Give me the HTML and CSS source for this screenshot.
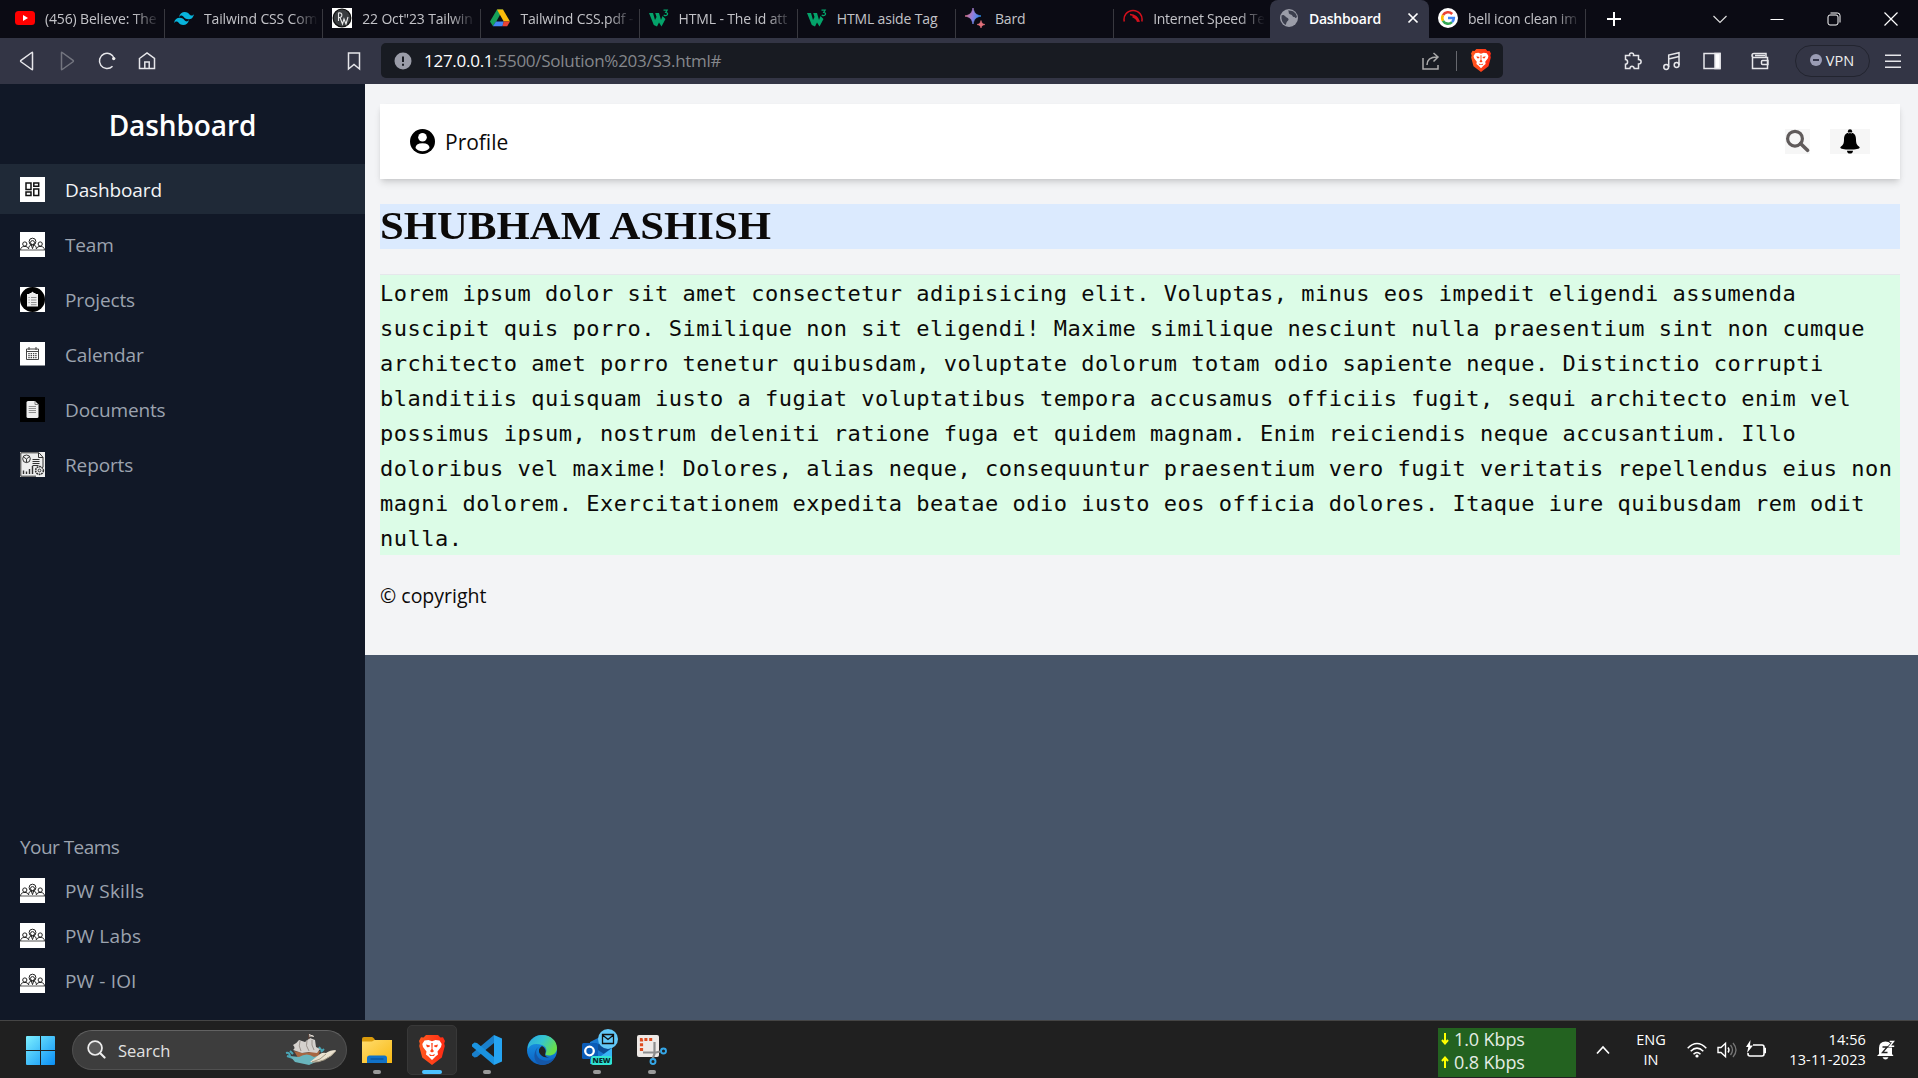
FILE: index.html
```html
<!DOCTYPE html>
<html lang="en">
<head>
<meta charset="utf-8">
<title>Dashboard</title>
<link rel="stylesheet" href="styles.css">
</head>
<body>
<svg class="defs" width="0" height="0" aria-hidden="true">
  <defs>
    <linearGradient id="g-win" x1="0" y1="0" x2="1" y2="1"><stop offset="0" stop-color="#7df0ff"/><stop offset="1" stop-color="#0a8ff5"/></linearGradient>
    <linearGradient id="g-brave" x1="0" y1="0" x2="1" y2="0"><stop offset="0" stop-color="#ff5a1f"/><stop offset="1" stop-color="#ff2a14"/></linearGradient>
    <linearGradient id="g-folder" x1="0" y1="0" x2="1" y2="1"><stop offset="0" stop-color="#ffdc6e"/><stop offset="1" stop-color="#f9b912"/></linearGradient>
    <linearGradient id="g-bard" x1="0" y1="0.3" x2="1" y2="0.6"><stop offset="0" stop-color="#e2707a"/><stop offset=".5" stop-color="#8f7fe0"/><stop offset="1" stop-color="#1b8ff0"/></linearGradient>
    <linearGradient id="g-edge" x1="0" y1="0" x2="1" y2=".5"><stop offset="0" stop-color="#2aa8e0"/><stop offset=".5" stop-color="#35c5d0"/><stop offset="1" stop-color="#68e04a"/></linearGradient>
    <linearGradient id="g-edge2" x1="0" y1="0" x2="0" y2="1"><stop offset="0" stop-color="#1a9be8"/><stop offset="1" stop-color="#0b62c4"/></linearGradient>
    <symbol id="team" viewBox="0 0 25 25">
      <rect width="25" height="25" fill="#fff"/>
      <g fill="none" stroke="#222" stroke-width="1"><circle cx="12.500" cy="9.600" r="3.400"/><circle cx="12.500" cy="10.600" r="2"/><path d="M8.600 17c0-2.600 1-3.600 2.700-4l1.200 3.600 1.200-3.600c1.700.400 2.700 1.400 2.700 4"/><circle cx="4.800" cy="12" r="2.100"/><circle cx="20.200" cy="12" r="2.100"/><path d="M.6 18c0-2.600 1.600-3.300 3.200-3.500h2.200c1.200.300 2 .900 2.300 2M24.400 18c0-2.600-1.600-3.300-3.200-3.500H19c-1.200.300-2 .900-2.300 2"/></g>
      <path d="M0 18h25" stroke="#555" stroke-width="1"/>
    </symbol>
    <symbol id="brave" viewBox="0 0 26 30">
      <path d="M7 0h12l2.500 2.500L24 2.200 26 6l-.8 2.500.6 2.500-3 11.500L13 30 3.200 22.500.2 11l.6-2.500L0 6l2-3.800 2.500.3z" fill="url(#g-brave)"/>
      <path d="M5.500 5.500 9.500 5l3.500 1.200L16.500 5l4 .5 2.200 3.500-.7 3-3.500 4.500.5 3-2.500 2L13 25l-3.500-3.500-2.500-2 .5-3L4 12 3.300 9z" fill="#fff"/>
      <path d="M7 9.500l4 1-.6 1.500-2.400.2zM19 9.500l-4 1 .6 1.500 2.400.2zM12.300 8h1.400l-.2 6 1.500 2.300L13 17.600l-2-1.300 1.500-2.300zM10 19l3 1.300 3-1.300-1 1.900H11z" fill="#ff4018"/>
    </symbol>
    <symbol id="w3" viewBox="0 0 20 20"><path d="M0 5h4l2 7 1.500-3L6.200 5H10l2 7 1.500-4 3 3-4 7.500L10 14.500 8 18.500 4.800 17z" fill="#04a36a"/><path d="M14.500 2.200h3.700L16.700 4.500c3.300.2 2 4.200-2 2.600" fill="none" stroke="#04a36a" stroke-width="1.200"/></symbol>
  </defs>
</svg>

<header class="tabs">
  <div class="tab"><svg class="fav" viewBox="0 0 20 20"><rect y="3" width="20" height="14" rx="3.500" fill="#f00"/><path d="M8 7l5 3-5 3z" fill="#fff"/></svg><span class="label">(456) Believe: The</span></div>
  <div class="tab"><svg class="fav" viewBox="0 0 20 20"><path d="M5 9.200C5.800 5.600 8 4 10.800 4c4 0 4.300 3 6.300 3.500 1.200.3 2-.2 2.900-1.300-.9 3.700-2.700 5-5.700 5-4 0-4.300-3-6.300-3.500C6.800 7.400 5.900 8 5 9.200zM0 15c.8-3.600 2.900-5.200 5.800-5.200 4 0 4.300 3 6.300 3.500 1.200.3 2.100-.3 2.900-1.400-.9 3.600-2.800 5-5.800 5-4 0-4.300-2.900-6.300-3.400C1.800 13.200.900 13.800 0 15z" fill="#08b4dc"/></svg><span class="label">Tailwind CSS Com</span></div>
  <div class="tab"><svg class="fav" viewBox="0 0 20 20"><rect width="20" height="20" fill="#fff"/><circle cx="10" cy="10" r="8.800" fill="#3a3d40" stroke="#111" stroke-width="1.300"/><path d="M6.500 13V5c4.500-1 4.500 4.500 0 4.500M8 9.500l2.500 6.500 1.500-5 2 5L16 9" fill="none" stroke="#e8e8e8" stroke-width="1.100"/></svg><span class="label">22 Oct"23 Tailwin</span></div>
  <div class="tab"><svg class="fav" viewBox="0 0 20 20"><path d="M7 1.500h6L6 14l-3.200 4L0 13.500z" fill="#17a05a"/><path d="M7 1.500h6L20 13.500h-6.300z" fill="#fdbc0a"/><path d="M6 13.500h8l-1.500 4.800H2.800z" fill="#4285f4"/><path d="M13.700 13.500H20l-2.800 4.800h-4.700z" fill="#ea4335"/></svg><span class="label">Tailwind CSS.pdf -</span></div>
  <div class="tab"><svg class="fav"><use href="#w3"/></svg><span class="label">HTML - The id att</span></div>
  <div class="tab"><svg class="fav"><use href="#w3"/></svg><span class="label full">HTML aside Tag</span></div>
  <div class="tab"><svg class="fav" viewBox="0 0 20 20"><path d="M8 0c1 5 3 7 8 8-5 1-7 3-8 8-1-5-3-7-8-8 5-1 7-3 8-8z" fill="url(#g-bard)" stroke="url(#g-bard)" stroke-width=".8"/><path d="M16 12.500c.5 2.500 1.500 3.500 4 4-2.500.5-3.500 1.500-4 3.500-.5-2-1.500-3-4-3.500 2.500-.5 3.500-1.500 4-4z" fill="#e2707a" stroke="#e2707a" stroke-width=".6"/></svg><span class="label full">Bard</span></div>
  <div class="tab last"><svg class="fav" viewBox="0 0 20 20"><g fill="none" stroke="#d5101c" stroke-width="1.500"><path d="M1.300 13.500A9 9 0 1 1 18.800 13.500M7 6.500c5 .5 8 3 9.300 7.200M9.500 8.500c3 1.200 4.700 3 5.200 5.300"/></g></svg><span class="label">Internet Speed Te</span></div>
  <div class="tab active"><svg class="fav" viewBox="0 0 20 20"><circle cx="10" cy="10" r="9" fill="#9b9da8"/><path d="M2.500 7.500c1-1.200 3-.5 4 1s2.500 1 3 2.500-1.500 2-2 3.500-.5 2-1 2.500C3.500 15 2 12 2.500 7.500zM9 2.500C10.500 4 9 5 10.500 6s2.500.5 3 2 2 .5 2.500 1.500 1 .5 2-.5C17.500 5 14 2 9 2.500z" fill="#3c3f4e"/></svg><span class="label full">Dashboard</span><svg class="close" viewBox="0 0 12 12"><path d="M1.500 1.500l9 9M10.500 1.500l-9 9" stroke="#fff" stroke-width="1.700"/></svg></div>
  <div class="tab after"><svg class="fav" viewBox="0 0 20 20"><circle cx="10" cy="10" r="10" fill="#fff"/><g fill="none" stroke-width="2.600"><path d="M14.200 6A5.800 5.800 0 0 0 5 7.200" stroke="#ea4335"/><path d="M5 7.200a5.800 5.800 0 0 0 0 5.600" stroke="#fbbc05"/><path d="M5 12.800a5.800 5.800 0 0 0 9 1.300" stroke="#34a853"/><path d="M14 14.100A5.800 5.800 0 0 0 15.800 10H10" stroke="#4285f4"/></g></svg><span class="label">bell icon clean im</span></div>
  <svg class="plus" viewBox="0 0 16 16"><path d="M8 1v14M1 8h14" stroke="#fff" stroke-width="2"/></svg>
  <div class="window">
    <svg viewBox="0 0 16 16"><path d="M1.500 5l6.500 6.500L14.500 5" fill="none" stroke="#ddd" stroke-width="1.200"/></svg>
    <svg viewBox="0 0 16 16"><path d="M1.500 8.500h13" stroke="#fff"/></svg>
    <svg viewBox="0 0 16 16"><rect x="2" y="4" width="10" height="10" rx="2" fill="none" stroke="#fff"/><path d="M4.500 2H11.500Q14 2 14 4.500V11.500" fill="none" stroke="#fff"/></svg>
    <svg viewBox="0 0 16 16"><path d="M1.500 1.500l13 13M14.500 1.500l-13 13" stroke="#fff" stroke-width="1.200"/></svg>
  </div>
</header>

<div class="toolbar">
  <div class="navs">
    <svg viewBox="0 0 20 20"><path d="M15.500 1.700v16.600q0 .7-.7.200L4 10.800q-.8-.8 0-1.500L14.800 1.500q.7-.5.700.200z"/></svg>
    <svg class="dim" viewBox="0 0 20 20"><path d="M4.500 1.700v16.600q0 .7.700.2L16 10.800q.8-.8 0-1.500L5.200 1.500q-.7-.5-.7.200z"/></svg>
    <svg viewBox="0 0 20 20"><path d="M15.500 15.200A7.600 7.600 0 1 1 17.400 8"/><circle cx="16.700" cy="7.600" r="1.700" fill="#eee" stroke="none"/></svg>
    <svg viewBox="0 0 20 20"><path d="M2.500 7.500L10 2l7.500 5.500v10h-15zM7.800 17.500V11h4.400v6.500"/></svg>
  </div>
  <svg class="bookmark" viewBox="0 0 20 20"><path d="M4.500 2h11v16L10 13.500 4.500 18z"/></svg>
  <div class="url">
    <svg class="info" viewBox="0 0 18 18"><circle cx="9" cy="9" r="8.500" fill="#9a9ca8" stroke="none"/><path d="M9 4.500v5.500M9 11.700v2" stroke="#181b22" stroke-width="2"/></svg>
    <span class="addr"><b>127.0.0.1</b>:5500/Solution%203/S3.html#</span>
    <svg class="share" viewBox="0 0 20 20"><path d="M2 7v11h15v-4M6 14c0-5 3-8 10-8M12.500 2l4.500 4-4.500 4.500"/></svg>
    <i></i>
    <svg class="shield"><use href="#brave"/></svg>
  </div>
  <div class="tools">
    <svg viewBox="0 0 20 20"><path d="M3.500 4.500H7.700C6.500 1 12.500 1 11.500 4.500h5v4c3.500 0 3.500 4.500 0 4.500v4.500h-4.300c-.5-3-4-3-4.300 0H3.500v-4.300c2.800-.2 2.800-4.300 0-4.600z"/></svg>
    <svg viewBox="0 0 20 20"><circle cx="4.200" cy="16" r="2.400"/><circle cx="14.600" cy="14" r="2.400"/><path d="M6.700 16V4L17 1.800V14M6.700 8L17 5.500"/></svg>
    <svg viewBox="0 0 20 20"><rect x="2" y="2.500" width="16" height="15"/><path d="M13 2.500h5v15h-5z" fill="#fff"/></svg>
    <svg class="wallet" viewBox="0 0 20 20"><path d="M16 6.500V2.500H4a2 2 0 0 0 0 4h13.500v11H2.500V4.500M18 9.500h-5.500a1 1 0 0 0-1 1v2a1 1 0 0 0 1 1H18zM5 4.500h10"/></svg>
    <div class="vpn"><svg viewBox="0 0 12 12"><circle cx="6" cy="6" r="6" fill="#9a9cb4" stroke="none"/><path d="M3 6h6" stroke="#2a2c40" stroke-width="1.800"/></svg>VPN</div>
    <svg class="menu" viewBox="0 0 18 20"><path d="M1 4.300h16M1 10.300h16M1 16.300h16"/></svg>
  </div>
</div>

<div class="page">
  <aside class="sidebar">
    <h2>Dashboard</h2>
    <nav>
      <a class="on"><svg viewBox="0 0 25 25"><rect width="25" height="25" fill="#fff"/><g fill="none" stroke="#111" stroke-width="1.500"><path d="M6 6h5v6.500H6zM13.800 6h4.900v3.300h-4.900zM6 15h5v3.500H6zM13.800 12h4.900v6.500h-4.900z"/></g></svg>Dashboard</a>
      <a><svg><use href="#team"/></svg>Team</a>
      <a><svg viewBox="0 0 25 25"><rect width="25" height="25" fill="#fff"/><circle cx="12.500" cy="12.500" r="12.500"/><path d="M7 7h2.500V6h1.700q1.300-2.500 2.600 0h1.700v1H18v12.500H7z" fill="#eee"/><path d="M8.500 10.500h1.200M11 10.500h5.500M8.500 13h1.200M11 13h5.500M8.500 15.500h1.200M11 15.500h5.500M11 17.700h5.500" stroke="#777" stroke-width=".8"/></svg>Projects</a>
      <a><svg viewBox="0 0 25 25"><rect width="25" height="23.500" fill="#fff"/><path d="M6.500 7h12v10.500h-12zM6.500 9.500h12M9 5v3M16 5v3" fill="none" stroke="#444" stroke-width="1"/><path d="M8.300 11.700h8.700M8.300 13.700h8.700M8.300 15.700h8.700" stroke="#444" stroke-width="1.200" stroke-dasharray="1.400 .9"/></svg>Calendar</a>
      <a><svg viewBox="0 0 25 25"><rect width="25" height="25" fill="#000"/><path d="M8 4h7L18.500 7.500v12q0 1.500-1.500 1.500H8q-1.500 0-1.500-1.500v-14Q6.500 4 8 4z" fill="#eee"/><path d="M15 4V7.500h3.500" stroke="#666" fill="none" stroke-width=".8"/><path d="M8.700 9.500H16M8.700 11.500H16M8.700 13.500H16M8.700 15.500H16" stroke="#777" stroke-width=".8"/></svg>Documents</a>
      <a><svg viewBox="0 0 25 25"><rect width="25" height="25" fill="#eee"/><g fill="none" stroke="#333" stroke-width="1"><path d="M.8.800H19l4 4.500V15M.8.800V24.200H16M18.500 1v4.500H23"/><circle cx="6.500" cy="6.800" r="3.800"/><path d="M6.500 7v3.500M6.500 7L3.500 5M6.500 7l3-2.500M12.500 7.500h7M12.500 9.500h7M12.500 11.500h7M12.500 13.500h6"/><path d="M3.500 22v-3.500M6.500 22v-2.500M9.500 22v-5M12.500 22v-8" stroke-width="1.400"/><circle cx="19.500" cy="18.500" r="3.900" stroke-width="1.600" stroke-dasharray="1.800 .7"/><circle cx="19.500" cy="18.500" r="1.400"/></g></svg>Reports</a>
    </nav>
    <section class="teams">
      <p>Your Teams</p>
      <a><svg><use href="#team"/></svg>PW Skills</a>
      <a><svg><use href="#team"/></svg>PW Labs</a>
      <a><svg><use href="#team"/></svg>PW - IOI</a>
    </section>
  </aside>
  <main>
    <div class="content">
      <div class="card">
        <svg class="user" viewBox="0 0 25 25"><circle cx="12.500" cy="12.500" r="12.500"/><circle cx="12.500" cy="8.300" r="4.300" fill="#fff"/><path d="M5.500 19q0-4.800 7-4.800t7 4.800q-2.800 3.200-7 3.200t-7-3.200z" fill="#fff"/></svg>
        <span>Profile</span>
        <svg class="find" viewBox="0 0 25 25"><rect width="25" height="25" fill="#f6f6f6"/><circle cx="10" cy="9.700" r="7.400" fill="none" stroke="#5f5a5a" stroke-width="3.200"/><path d="M15.500 14.500l7 6.800" stroke="#5f5a5a" stroke-width="3.600" stroke-linecap="round"/></svg>
        <svg class="bell" viewBox="0 0 40 25"><rect width="40" height="25" fill="#f6f6f6"/><circle cx="20" cy="2.300" r="2.100"/><path d="M20 3.600c-4.500 0-6 3-6 7 0 4.500-1.200 6-3.500 7.300-1 1.900 3 2.600 9.500 2.600s10.500-.7 9.500-2.600C27.200 16.600 26 15 26 10.600c0-4-1.500-7-6-7zM17 21.700h6c0 3.800-6 3.800-6 0z"/><path d="M18 4.200q2-1.300 4 0" fill="none" stroke="#ddd" stroke-width=".8"/></svg>
      </div>
      <h1><span>SHUBHAM ASHISH</span></h1>
      <p class="lorem">Lorem ipsum dolor sit amet consectetur adipisicing elit. Voluptas, minus eos impedit eligendi assumenda suscipit quis porro. Similique non sit eligendi! Maxime similique nesciunt nulla praesentium sint non cumque architecto amet porro tenetur quibusdam, voluptate dolorum totam odio sapiente neque. Distinctio corrupti blanditiis quisquam iusto a fugiat voluptatibus tempora accusamus officiis fugit, sequi architecto enim vel possimus ipsum, nostrum deleniti ratione fuga et quidem magnam. Enim reiciendis neque accusantium. Illo doloribus vel maxime! Dolores, alias neque, consequuntur praesentium vero fugit veritatis repellendus eius non magni dolorem. Exercitationem expedita beatae odio iusto eos officia dolores. Itaque iure quibusdam rem odit nulla.</p>
      <footer>© copyright</footer>
    </div>
  </main>
</div>

<div class="taskbar">
  <svg class="start" viewBox="0 0 29 29"><path d="M1 0h13v14H0V1q0-1 1-1zM15 0h13q1 0 1 1v13H15zM0 15h14v14H1q-1 0-1-1zM15 15h14v13q0 1-1 1H15z" fill="url(#g-win)"/></svg>
  <div class="search">
    <svg class="lens" viewBox="0 0 20 20"><circle cx="8.500" cy="8.500" r="7.300" fill="#5a5a5a" stroke="#eee" stroke-width="1.800"/><path d="M14 14l4.500 4.500" stroke="#eee" stroke-width="2.200" stroke-linecap="round"/></svg>
    <span>Search</span>
    <svg class="ship" viewBox="0 0 52 32"><path d="M1 19q4-1 4 4M5 17l3 3M34 13l3 4M39 15l-3 3M2 22l6 2" stroke="#49a5b5" stroke-width="2" fill="none"/><path d="M9 17l9 2 17-2-3 9-17 1z" fill="#a76742"/><path d="M14 23q8-5 15 0l10-3-6 7-9 4-14-3-5-6z" fill="#69b5bd"/><path d="M8 11q4-2 6-5l6 2 5-4 5 2 1 7 4 2-3 4-8-1-7 1-9-3q3-2 0-5z" fill="#d5d1cd"/><path d="M15 7q-2 5 1 10M22 6q-2 6 2 11M27 6q-1 5 2 10" stroke="#9a928c" fill="none"/><path d="M24 0v5" stroke="#6a4638"/><path d="M24 .5l5 2M24 2h4" stroke="#e8e0d8"/><path d="M25 28l10-8q3-2 6-1 4-3 10-3-2 5-9 8-6 5-17 4z" fill="#e9e1cf"/><path d="M27 28q9-2 14-8M27 28q13 1 24-11" stroke="#a29a86" fill="none"/></svg>
  </div>
  <div class="app"><svg viewBox="0 0 30 30"><path d="M0 4q0-2 2-2h8q1 0 2 1.500L13 5v5H0z" fill="#d99a0b"/><path d="M0 6.500h10l2.500-1.500H30v23H0z" fill="url(#g-folder)"/><path d="M5 28v-5q0-2.500 2.500-2.500h15q2.500 0 2.500 2.500v5z" fill="#1172c8"/><path d="M8.500 24h13" stroke="#0a4f96" stroke-width="1.200"/></svg><i></i></div>
  <div class="app current"><svg viewBox="0 0 26 30"><use href="#brave"/></svg><i></i></div>
  <div class="app"><svg viewBox="0 0 30 30"><path d="M22 0l8 3.500v23L22 30z" fill="#25a4f2"/><path d="M22 0v8L5 22l-2.500.5L0 20.500v-2z" fill="#1a80cc"/><path d="M22 30v-8L5 8 2.500 7.500 0 9.500v2z" fill="#1a93e0"/></svg><i></i></div>
  <div class="app"><svg viewBox="0 0 30 30"><circle cx="15" cy="15" r="15" fill="url(#g-edge2)"/><path d="M1 11C3 4 9 0 15 0c9 0 15 6 15 13 0 5-4 7.500-8 7.500-3 0-4-1-3.500-2 2-3 1-7-3.500-8.500C9 8 3 9 1 14z" fill="url(#g-edge)"/><path d="M12 12c-5 3-3 11 3 13 5 2 10 0 12.500-2.500C25 28 20 30 15 30 9 29 6 23 8 17c1-3 2-4 4-5z" fill="#1557a8"/><path d="M15 11q-5 3-2 8 3 4 9 3.500-5-1-3.700-4Q20 14 15 11z" fill="#222"/></svg></div>
  <div class="app outlook"><svg viewBox="0 0 36 36"><path d="M8 13l12-6 10 9v19H8z" fill="#1878d0"/><path d="M8 16l22 14V14z" fill="#0b4d94"/><path d="M8 35l22-16v16z" fill="#38b6f5"/><rect y="14" width="16" height="16" rx="1.500" fill="#0a5cb8"/><circle cx="7.500" cy="22" r="4.300" fill="none" stroke="#fff" stroke-width="2.300"/><circle cx="26" cy="10" r="10" fill="#62c8f8"/><path d="M20.500 5.500h11v9h-11zM20.500 6l5.500 4.500L31.500 6" fill="none" stroke="#111" stroke-width="1.300"/></svg><b>NEW</b><i></i></div>
  <div class="app"><svg viewBox="0 0 30 30"><rect width="22" height="22" rx="2" fill="#eee9e6"/><path d="M4.500 16V4.500H17" fill="none" stroke="#dd4a1d" stroke-width="3.200" stroke-dasharray="3 1.800"/><path d="M17.500 7v12l-2 5M6 17.500h13l4-1" stroke="#8d8d8d" stroke-width="2.200" fill="none"/><circle cx="26.500" cy="16" r="2.500" fill="none" stroke="#35a7e8" stroke-width="1.900"/><circle cx="16" cy="26.500" r="2.500" fill="none" stroke="#35a7e8" stroke-width="1.900"/></svg><i></i></div>
  <div class="net">
    <div><svg viewBox="0 0 8 12"><path d="M4 0v10M1 7l3 3.500L7 7" fill="none" stroke="#ff0" stroke-width="2"/></svg>1.0 Kbps</div>
    <div><svg viewBox="0 0 8 12"><path d="M4 12V2M1 5l3-3.500L7 5" fill="none" stroke="#ff0" stroke-width="2"/></svg>0.8 Kbps</div>
  </div>
  <svg class="up" viewBox="0 0 14 10"><path d="M1 8.500L7 2l6 6.500" fill="none" stroke="#fff" stroke-width="1.700"/></svg>
  <div class="lang">ENG<br>IN</div>
  <div class="status">
    <svg viewBox="0 0 20 20"><g fill="none" stroke="#fff" stroke-width="1.500"><path d="M.7 8.200q9.300-9.400 18.600 0M3.700 11.300q6.300-6.300 12.600 0M6.500 14.200q3.500-3.500 7 0"/></g><circle cx="10" cy="16" r="1.600" fill="#fff"/></svg>
    <svg viewBox="0 0 20 20"><path d="M1 7.500h3L8.500 3.300v13.400L4 12.500H1z" fill="none" stroke="#fff" stroke-width="1.400"/><path d="M11 7.500q2 2.500 0 5" fill="none" stroke="#fff" stroke-width="1.400"/><path d="M13.500 5q4 5 0 10M16 3q6 7 0 14" fill="none" stroke="#777" stroke-width="1.300"/></svg>
    <svg viewBox="0 0 20 20"><path d="M7 5h9q2 0 2 2v7q0 2-2 2H4q-2 0-2-2v-1M18 8.500h1.500v4H18" fill="none" stroke="#fff" stroke-width="1.600"/><path d="M4.500 0L0 7h2.300L1 13l6-7.500H4z" fill="#fff"/></svg>
  </div>
  <div class="clock">14:56<br>13-11-2023</div>
  <svg class="dnd" viewBox="0 0 18 20"><path d="M2 14V8q0-6.500 6.500-6.500Q15 1.500 15 8v6l1.500 2H0zM5.500 17.200h6q-1 2.300-3 2.300t-3-2.300z" fill="#fff"/><path d="M5.500 7h4.700l-4.700 5.500h5" fill="none" stroke="#222" stroke-width="1.400"/><path d="M12.500 1.500h4.300l-4.300 4.800h5" fill="none" stroke="#222" stroke-width="2.600"/><path d="M12.700 1.500h3.800l-3.800 4.800h4.500" fill="none" stroke="#fff" stroke-width="1.400"/></svg>
</div>
</body>
</html>
```
FILE: styles.css
```css
* { box-sizing: border-box; margin: 0; padding: 0; }
html, body { width: 1918px; height: 1078px; overflow: hidden; }
body {
  display: flex;
  flex-direction: column;
  font-family: "Open Sans", "Noto Sans", sans-serif;
  background: #202020;
}
svg { display: block; flex: none; }
.defs { position: absolute; }

/* Tab strip */
.tabs { height: 38px; flex: none; display: flex; align-items: center; background: #0b0b14; color: #c3c3c8; }
.tab {
  width: 158.200px; height: 38px; flex: none;
  display: flex; align-items: center; gap: 10px; padding: 0 5px 2px 9px;
  font-size: 14px; letter-spacing: -0.150px; white-space: nowrap;
  background: linear-gradient(#38383f, #38383f) right bottom / 1px 29px no-repeat;
}
.tab:first-child { width: 165px; padding-left: 15px; }
.tab.last { width: 155.800px; letter-spacing: -0.250px; }
.tab.last, .tab.active { background-image: none; }
.label { flex: 1; min-width: 0; overflow: hidden; mask-image: linear-gradient(90deg, #000 calc(100% - 26px), transparent); }
.label.full { mask-image: none; }
.tab.active { width: 159px; background-color: #333545; border-radius: 8px 8px 0 0; color: #fff; font-weight: 600; padding-right: 10px; letter-spacing: -0.250px; }
.tab.after { width: 157px; padding-left: 9px; letter-spacing: -0.200px; }
.fav { width: 20px; height: 20px; }
.close { width: 12px; height: 12px; }
.plus { width: 16px; height: 16px; margin-left: 20px; }
.window { display: flex; gap: 41px; margin-left: auto; margin-right: 19px; }
.window svg { width: 16px; height: 16px; }

/* Address row */
.toolbar { height: 46px; flex: none; display: flex; align-items: center; background: #333545; padding-bottom: 1px; }
.toolbar svg { fill: none; stroke: #e6e6ea; stroke-width: 1.500; width: 20px; height: 20px; }
.navs { display: flex; gap: 20px; padding-left: 17px; }
.navs .dim { stroke: #73757f; }
.toolbar .bookmark { margin-left: 187px; }
.url {
  width: 1122px; height: 35px; margin-left: 17px; border-radius: 5px; background: #181b22;
  display: flex; align-items: center; padding: 0 12px 0 13px;
  color: #85878c; font-size: 17px; letter-spacing: -0.270px;
}
.url b { font-weight: 400; color: #fff; }
.toolbar .url .info { width: 18px; height: 18px; }
.addr { margin-left: 12px; flex: 1; }
.toolbar .share { stroke: #aaa; }
.url i { width: 1px; height: 20px; background: #66686e; margin: 0 14px 0 15px; }
.toolbar .shield { width: 20px; height: 23px; stroke: none; }
.tools { display: flex; align-items: center; gap: 20px; margin-left: 119px; }
.toolbar .wallet { margin-left: 8px; }
.vpn {
  width: 75px; height: 32px; border: 1px solid #22242f; border-radius: 16px; margin-left: 5px; padding: 0 1px 1px 0;
  display: flex; align-items: center; justify-content: center; gap: 4px; color: #eee; font-size: 14.500px;
}
.toolbar .vpn svg { width: 12px; height: 12px; }
.toolbar .menu { width: 18px; margin-left: -6px; }

/* Web page */
.page { height: 936px; flex: none; display: flex; background: #475569; }
.sidebar { width: 365px; flex: none; background: #111827; color: #9ca3af; display: flex; flex-direction: column; font-size: 19px; letter-spacing: -0.130px; }
.sidebar h2 { height: 80px; line-height: 82px; text-align: center; color: #fff; font-size: 28px; font-weight: 600; letter-spacing: -0.100px; }
.sidebar nav { display: flex; flex-direction: column; gap: 5px; }
.sidebar a { height: 50px; display: flex; align-items: center; gap: 20px; padding: 1px 20px 0; }
.sidebar a svg { width: 25px; height: 25px; }
.sidebar .on { background: #1f2937; color: #f3f4f6; }
.teams { margin-top: auto; padding-bottom: 16px; }
.teams p { height: 45px; line-height: 47px; padding-left: 20px; letter-spacing: -0.550px; }
.sidebar .teams a { height: 45px; letter-spacing: 0.150px; padding-top: 0; position: relative; top: -1px; }
main { flex: 1; }
.content { height: 571px; background: #f3f4f6; padding: 20px 18px 0 15px; display: flex; flex-direction: column; gap: 25px; color: #0c0a09; }
.card {
  height: 75px; background: #fff; display: flex; align-items: center; padding: 0 30px; font-size: 21px;
  box-shadow: 0 5px 7px -1px rgba(0,0,0,.12), 0 2px 5px -2px rgba(0,0,0,.12);
}
.user { width: 25px; height: 25px; margin-right: 10px; }
.card span { flex: 1; }
.find { width: 25px; height: 25px; }
.bell { width: 40px; height: 25px; margin-left: 20px; }
h1 { height: 45px; line-height: 43px; background: #dbeafe; font-family: "Liberation Serif", serif; font-weight: 700; font-size: 39px; white-space: nowrap; }
h1 span { display: inline-block; transform: scaleX(1.097); transform-origin: left; }
.lorem {
  height: 281px; border-top: 1px solid #e5e7eb; background: #dcfce7; padding-top: 1px;
  font-family: "DejaVu Sans Mono", monospace; font-size: 22px; line-height: 35px; letter-spacing: 0.505px;
}
footer { font-size: 19.500px; line-height: 32px; }

/* Taskbar */
.taskbar { flex: 1; display: flex; align-items: center; background: #202020; border-top: 1px solid #454545; color: #fff; }
.start { width: 29px; height: 29px; margin: 1px 0 0 26px; }
.search {
  width: 275px; height: 40px; margin: 0 5px 0 17px; border-radius: 20px; background: #3d3d3d; border: 1px solid #505050; border-top-color: #626262;
  display: flex; align-items: center; padding: 0 9px 0 14px; font-size: 16.500px; color: #e2e2e2;
}
.lens { width: 19px; height: 19px; }
.search span { margin-left: 12px; padding-top: 1px; flex: 1; }
.ship { width: 52px; height: 32px; }
.app { width: 50px; height: 50px; margin: 1px 5px 0 0; position: relative; display: flex; align-items: center; justify-content: center; border-radius: 5px; }
.app svg { width: 30px; height: 30px; }
.search + .app { margin-left: 0; }
.app.current { background: #2e2e2e; border: 1px solid #383838; }
.app i { position: absolute; bottom: 1px; left: 21px; width: 8px; height: 4px; border-radius: 2px; background: #9a9a9a; }
.app.current i { left: 14px; bottom: 0; width: 20px; background: #4cc2ff; }
.outlook svg { width: 36px; height: 36px; position: relative; top: -3px; left: 3px; }
.outlook b { position: absolute; left: 19px; top: 31px; width: 21px; height: 9px; line-height: 9px; border-radius: 2px; background: #2fe3d3; color: #07282c; font-size: 7.500px; font-weight: 800; text-align: center; }
.net { width: 138px; height: 49px; margin: 6px 20px 0 auto; background: #236220; font-size: 18px; line-height: 22.500px; color: #e4ece4; letter-spacing: -0.100px; }
.net div { display: flex; align-items: center; padding-left: 3px; gap: 5px; }
.net svg { width: 8px; height: 12px; }
.up { width: 14px; height: 10px; }
.lang { width: 30px; margin-left: 26px; text-align: center; font-size: 14.500px; line-height: 20px; }
.status { display: flex; gap: 9.500px; margin-left: 21px; }
.status svg { width: 20px; height: 20px; }
.clock { width: 100px; text-align: right; font-size: 14.500px; line-height: 20px; letter-spacing: 0.100px; }
.dnd { width: 18px; height: 20px; margin: 0 23px 0 11px; }
```
